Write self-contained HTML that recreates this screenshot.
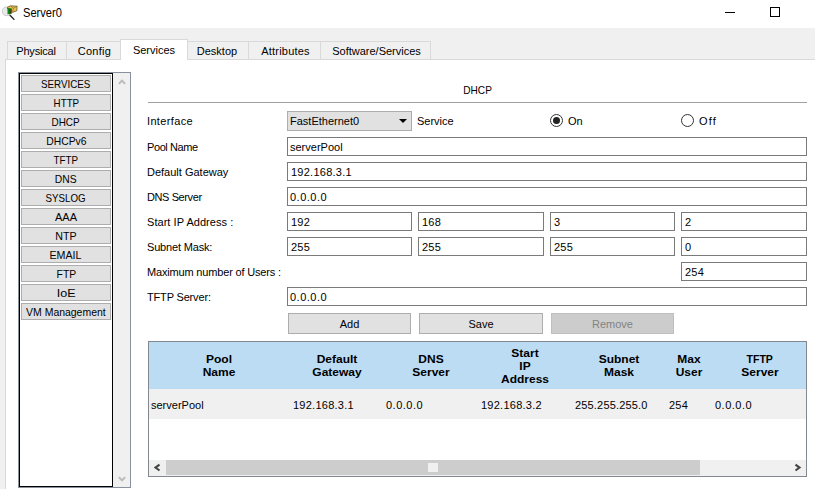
<!DOCTYPE html>
<html><head><meta charset="utf-8"><title>Server0</title>
<style>
*{box-sizing:border-box;margin:0;padding:0}
html,body{width:815px;height:489px;overflow:hidden;background:#f0f0f0}
body{position:relative;font-family:"Liberation Sans","DejaVu Sans",sans-serif;font-size:11px;color:#000}
.abs,.abs *{position:absolute}
.abs span{position:static}
.abs span.sx{position:static;display:inline-block;transform-origin:50% 50%}
#title{left:0;top:0;width:815px;height:28px;background:#fff}
#title .t{left:23px;top:6px;font-size:12.6px;line-height:15px;white-space:nowrap;transform:scaleX(0.88);transform-origin:0 0}
.tab{top:41px;height:19px;border:1px solid #d9d9d9;border-bottom:none;background:#f0f0f0;text-align:center;line-height:18px;font-size:11px;white-space:nowrap}
.tab.sel{top:39px;height:21px;background:#fff;z-index:3;line-height:20px}
#pane{left:5px;top:59px;width:812px;height:432px;background:#fff;border:1px solid #d9d9d9}
#listo{left:18px;top:72px;width:113px;height:416px;border:1px solid #8a909c;background:#f0f0f0}
#list{left:19px;top:73px;width:94px;height:414px;border:1px solid #000;background:#fff}
.sb{left:21px;width:90px;height:17px;background:#e1e1e1;border:1px solid #adadad;text-align:center;line-height:15px;padding-top:1px;font-size:11px;white-space:nowrap}
#vscroll{left:113px;top:73px;width:17px;height:414px;background:#f0f0f0}
.lbl{left:147px;line-height:14px;white-space:nowrap}
.inp{height:19px;background:#fff;border:1px solid #7a7a7a;line-height:17px;padding:1px 0 0 2px;white-space:nowrap;overflow:hidden}
.num{padding-left:3px}
.btn{top:313px;height:21px;width:124px;background:#e1e1e1;border:1px solid #adadad;text-align:center;line-height:21px;white-space:nowrap}
.th{font-weight:bold;font-size:11px;line-height:13px;text-align:center;white-space:nowrap;transform:scaleX(1.09);transform-origin:50% 50%}
.td{top:398px;line-height:14px;white-space:nowrap}
</style></head><body>
<div class="abs" id="title">
 <svg style="left:0px;top:0px" width="22" height="24" viewBox="0 0 22 24">
  <circle cx="6.6" cy="11.3" r="4.4" fill="#e9e9e9" stroke="#c6c6c6" stroke-width="0.9"/>
  <path d="M10 15.3 L14 19.4" stroke="#1a1a1a" stroke-width="1.3" stroke-linecap="round"/>
  <path d="M7.6 7 L10.6 5.8 L17.1 6.2 L16.9 10.8 L12.6 12.3 L7.6 9 Z" fill="#e9bd55" stroke="#5b4a1c" stroke-width="0.7" stroke-linejoin="round"/>
  <path d="M10.6 5.8 L13.3 8.2 L17.1 6.2 M13.3 8.2 L12.6 12.3" fill="none" stroke="#7a6424" stroke-width="0.6"/>
  <path d="M7.5 7.9 L11.9 8.5 L11.9 13.8 L7.5 14.2 Z" fill="#0b8a12"/>
  <path d="M9.9 8.7 L10.3 13.4" stroke="#5a1a10" stroke-width="1"/>
 </svg>
 <div class="t">Server0</div>
 <div style="left:725px;top:12px;width:10px;height:1px;background:#000"></div>
 <div style="left:770px;top:7px;width:10px;height:10px;border:1px solid #000"></div>
</div>
<div class="abs">
 <div class="tab" style="left:7px;width:60px;padding-right:2px"><span style="position:static;letter-spacing:-0.2px">Physical</span></div>
 <div class="tab" style="left:66px;width:55px;padding-left:2px"><span style="position:static;letter-spacing:0.3px">Config</span></div>
 <div class="tab sel" style="left:120px;width:68px">Services</div>
 <div class="tab" style="left:187px;width:62px;padding-right:2px">Desktop</div>
 <div class="tab" style="left:248px;width:73px;padding-left:2px"><span style="position:static;letter-spacing:0.2px">Attributes</span></div>
 <div class="tab" style="left:320px;width:111px;padding-left:2px">Software/Services</div>
</div>
<div class="abs" id="pane"></div>
<div class="abs" id="listo"></div>
<div class="abs" id="list"></div>
<div class="abs" id="sbtns">
 <div class="sb" style="top:75px"><span class="sx" style="transform:scaleX(0.89)">SERVICES</span></div>
 <div class="sb" style="top:94px"><span class="sx" style="transform:scaleX(0.89)">HTTP</span></div>
 <div class="sb" style="top:113px"><span class="sx" style="transform:scaleX(0.9)">DHCP</span></div>
 <div class="sb" style="top:132px"><span class="sx" style="transform:scaleX(0.94)">DHCPv6</span></div>
 <div class="sb" style="top:151px"><span class="sx" style="transform:scaleX(0.89)">TFTP</span></div>
 <div class="sb" style="top:170px"><span class="sx" style="transform:scaleX(0.94)">DNS</span></div>
 <div class="sb" style="top:189px"><span class="sx" style="transform:scaleX(0.885)">SYSLOG</span></div>
 <div class="sb" style="top:208px">AAA</div>
 <div class="sb" style="top:227px"><span class="sx" style="transform:scaleX(0.97)">NTP</span></div>
 <div class="sb" style="top:246px"><span class="sx" style="transform:scaleX(0.97)">EMAIL</span></div>
 <div class="sb" style="top:265px"><span class="sx" style="transform:scaleX(0.94)">FTP</span></div>
 <div class="sb" style="top:284px"><span class="sx" style="transform:scaleX(1.14)">IoE</span></div>
 <div class="sb" style="top:303px"><span class="sx" style="transform:scaleX(0.95)">VM Management</span></div>
</div>
<div class="abs" id="vscroll">
 <svg style="left:5px;top:6px" width="8" height="6" viewBox="0 0 8 6"><path d="M0.9 4.9 L4 1.7 L7.1 4.9" fill="none" stroke="#b9b9b9" stroke-width="1.9"/></svg>
 <svg style="left:5px;top:403px" width="8" height="6" viewBox="0 0 8 6"><path d="M0.9 1.1 L4 4.3 L7.1 1.1" fill="none" stroke="#b9b9b9" stroke-width="1.9"/></svg>
</div>
<div class="abs" id="form">
 <div class="lbl" style="left:462px;top:83px"><span class="sx" style="transform:scaleX(0.92)">DHCP</span></div>
 <div style="left:148px;top:102px;width:659px;height:1px;background:#a0a0a0"></div>
 <div class="lbl" style="top:114px"><span style="position:static;letter-spacing:0.35px">Interface</span></div>
 <div class="inp" style="left:287px;top:111px;width:125px;height:20px;background:#e1e1e1;border-color:#adadad;padding:1px 0 0 2px">FastEthernet0</div>
 <svg style="left:399px;top:119px" width="8" height="4" viewBox="0 0 8 4"><path d="M0 0 L8 0 L4 4 Z" fill="#000"/></svg>
 <div class="lbl" style="left:417px;top:114px">Service</div>
 <div style="left:550px;top:114px;width:13px;height:13px;border:1px solid #333;border-radius:50%;background:#fff"></div>
 <div style="left:553px;top:117px;width:7px;height:7px;border-radius:50%;background:#222"></div>
 <div class="lbl" style="left:568px;top:114px">On</div>
 <div style="left:681px;top:114px;width:13px;height:13px;border:1px solid #333;border-radius:50%;background:#fff"></div>
 <div class="lbl" style="left:699px;top:114px;letter-spacing:1.2px">Off</div>
 <div class="lbl" style="top:140px"><span style="position:static;letter-spacing:-0.4px">Pool Name</span></div>
 <div class="lbl" style="top:165px">Default Gateway</div>
 <div class="lbl" style="top:190px"><span style="position:static;letter-spacing:-0.4px">DNS Server</span></div>
 <div class="lbl" style="top:215px"><span style="position:static;letter-spacing:0.05px">Start IP Address :</span></div>
 <div class="lbl" style="top:240px"><span style="position:static;letter-spacing:-0.17px">Subnet Mask:</span></div>
 <div class="lbl" style="top:265px"><span style="position:static;letter-spacing:-0.17px">Maximum number of Users :</span></div>
 <div class="lbl" style="top:290px"><span style="position:static;letter-spacing:-0.17px">TFTP Server:</span></div>
 <div class="inp" style="left:287px;top:137px;width:520px">serverPool</div>
 <div class="inp num" style="left:287px;top:162px;width:520px"><span style="position:static;letter-spacing:0.25px">192.168.3.1</span></div>
 <div class="inp" style="left:287px;top:187px;width:520px"><span style="position:static;letter-spacing:0.5px">0.0.0.0</span></div>
 <div class="inp" style="left:287px;top:287px;width:520px"><span style="position:static;letter-spacing:0.5px">0.0.0.0</span></div>
 <div class="inp num" style="left:287px;top:212px;width:125px"><span style="position:static;letter-spacing:0.2px">192</span></div>
 <div class="inp num" style="left:418px;top:212px;width:126px"><span style="position:static;letter-spacing:0.2px">168</span></div>
 <div class="inp num" style="left:550px;top:212px;width:125px"><span style="position:static;letter-spacing:0.2px">3</span></div>
 <div class="inp num" style="left:681px;top:212px;width:126px"><span style="position:static;letter-spacing:0.2px">2</span></div>
 <div class="inp num" style="left:287px;top:237px;width:125px"><span style="position:static;letter-spacing:0.2px">255</span></div>
 <div class="inp num" style="left:418px;top:237px;width:126px"><span style="position:static;letter-spacing:0.2px">255</span></div>
 <div class="inp num" style="left:550px;top:237px;width:125px"><span style="position:static;letter-spacing:0.2px">255</span></div>
 <div class="inp num" style="left:681px;top:237px;width:126px"><span style="position:static;letter-spacing:0.2px">0</span></div>
 <div class="inp num" style="left:681px;top:262px;width:126px"><span style="position:static;letter-spacing:0.2px">254</span></div>
 <div class="btn" style="left:288px;width:123px">Add</div>
 <div class="btn" style="left:419px">Save</div>
 <div class="btn" style="left:551px;width:123px;background:#cccccc;border-color:#bfbfbf;color:#838383">Remove</div>
 <div id="tbl" style="left:148px;top:341px;width:659px;height:136px;border:1px solid #828790;background:#fff"></div>
 <div style="left:149px;top:342px;width:657px;height:47px;background:#bcdcf4"></div>
 <div style="left:149px;top:389px;width:657px;height:30px;background:#f0f0f0"></div>
 <div class="th" style="left:179px;top:353px;width:80px">Pool<br>Name</div>
 <div class="th" style="left:297px;top:353px;width:80px">Default<br>Gateway</div>
 <div class="th" style="left:391px;top:353px;width:80px">DNS<br>Server</div>
 <div class="th" style="left:485px;top:347px;width:80px">Start<br>IP<br>Address</div>
 <div class="th" style="left:579px;top:353px;width:80px">Subnet<br>Mask</div>
 <div class="th" style="left:649px;top:353px;width:80px">Max<br>User</div>
 <div class="th" style="left:720px;top:353px;width:80px"><span class="sx" style="transform:scaleX(0.88)">TFTP</span><br>Server</div>
 <div class="td" style="left:151px">serverPool</div>
 <div class="td" style="left:293px"><span style="position:static;letter-spacing:0.25px">192.168.3.1</span></div>
 <div class="td" style="left:386px"><span style="position:static;letter-spacing:0.5px">0.0.0.0</span></div>
 <div class="td" style="left:481px"><span style="position:static;letter-spacing:0.25px">192.168.3.2</span></div>
 <div class="td" style="left:575px"><span style="position:static;letter-spacing:0.17px">255.255.255.0</span></div>
 <div class="td" style="left:669px"><span style="position:static;letter-spacing:0.2px">254</span></div>
 <div class="td" style="left:715px"><span style="position:static;letter-spacing:0.5px">0.0.0.0</span></div>
 <div style="left:149px;top:460px;width:657px;height:16px;background:#f0f0f0"></div>
 <div style="left:166px;top:460px;width:534px;height:15px;background:#cdcdcd"></div>
 <div style="left:428px;top:463px;width:10px;height:9px;background:#f0f0f0"></div>
 <svg style="left:153px;top:463px" width="8" height="9" viewBox="0 0 8 9"><path d="M6.5 1.7 L2.5 4.6 L6.5 7.5" fill="none" stroke="#444" stroke-width="2.1"/></svg>
 <svg style="left:794px;top:463px" width="8" height="9" viewBox="0 0 8 9"><path d="M1.5 1.7 L5.5 4.6 L1.5 7.5" fill="none" stroke="#444" stroke-width="2.1"/></svg>
</div>
</body></html>
